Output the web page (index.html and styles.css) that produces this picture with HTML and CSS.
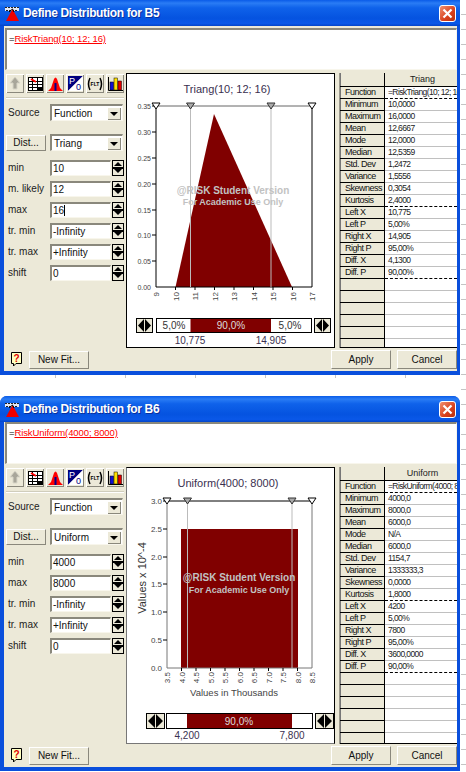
FILE: index.html
```html
<!DOCTYPE html>
<html>
    <head>
        <meta charset="utf8">
        <title>Define Distribution</title>
        <link rel="stylesheet" href="styles.css">
    </head>
    <body>
        <div class="window win_first">
            <div class="titlebar">
                <svg class="app_icon" width="16" height="15" viewBox="0 0 16 15"><rect x="0" y="1" width="14" height="4" fill="#e4e8f4"/><path d="M0 1.500 H14 M1 4.500 H13" stroke="#222" stroke-dasharray="2 1"/><path d="M1 15 L7.500 3 L14 15 Z" fill="#f00000"/><path d="M4 6 L7.500 3 L9 6" fill="none" stroke="#000"/></svg>
                <span class="title_text">Define Distribution for B5</span>
                <button class="close_btn"><svg width="11" height="11" viewBox="0 0 11 11"><path d="M1.5 1.5 L9.5 9.5 M9.5 1.5 L1.5 9.5" stroke="#fff" stroke-width="2.2"/></svg></button>
            </div>
            <div class="client">
                <div class="formula"><span class="eq">=</span><span class="ref">RiskTriang(10; 12; 16)</span></div>
                <div class="body_row">
                    <div class="left_pane">
                        <div class="toolbar">
                            <span class="tool"><svg width="14" height="15" viewBox="0 0 14 15"><path d="M7 1 L12 7 H9 V13 H5 V7 H2 Z" fill="#a8a69a" stroke="#d8d6c8"/></svg></span>
                            <span class="tool"><svg width="15" height="14" viewBox="0 0 15 14"><rect x="0.5" y="0.5" width="14" height="13" fill="#fff" stroke="#000"/><path d="M0 4.5 H15 M0 7.5 H15 M0 10.5 H15 M4.5 0 V14 M9.5 0 V14" stroke="#000"/><path d="M3 2 L8 5" stroke="#f00" stroke-width="2"/><rect x="9" y="10" width="5" height="3" fill="#000"/></svg></span>
                            <span class="tool"><svg width="15" height="14" viewBox="0 0 15 14"><path d="M0 14 L3 11 L6 2 Q7.500 -1 9 2 L12 11 L15 14 Z" fill="#f00"/><rect x="6.500" y="6" width="2" height="8" fill="#00008b"/></svg></span>
                            <span class="tool"><svg width="15" height="15" viewBox="0 0 15 15"><path d="M0 0 H15 L0 15 Z" fill="#00007f"/><path d="M15 0 V15 H0 Z" fill="#fff"/><text x="1" y="8" class="tool_letter tool_p">P</text><text x="8" y="14" class="tool_letter tool_o">0</text></svg></span>
                            <span class="tool"><svg width="16" height="14" viewBox="0 0 16 14"><path d="M3 1 Q0 7 3 13 M13 1 Q16 7 13 13" fill="none" stroke="#000" stroke-width="1.500"/><text x="8" y="9" class="tool_flt">FLT</text></svg></span>
                            <span class="tool"><svg width="15" height="14" viewBox="0 0 15 14"><path d="M0.5 0 V13.500 H15" fill="none" stroke="#000"/><rect x="2" y="5" width="3.500" height="8" fill="#1010d0" stroke="#000" stroke-width=".5"/><rect x="6" y="1" width="3.500" height="12" fill="#ffe000" stroke="#000" stroke-width=".5"/><rect x="10" y="4" width="3.500" height="9" fill="#e00000" stroke="#000" stroke-width=".5"/></svg></span>
                        </div>
                        <div class="sep"></div>
                        <div class="field source_field">
                            <span class="label">Source</span>
                            <span class="combo"><span class="combo_val">Function</span><span class="combo_btn"></span></span>
                        </div>
                        <div class="field dist_field">
                            <button class="btn dist_btn">Dist...</button>
                            <span class="combo"><span class="combo_val">Triang</span><span class="combo_btn"></span></span>
                        </div>
                        <div class="params">
                            <div class="field"><span class="label">min</span><span class="input">10</span><span class="spin"><i class="up"></i><i class="down"></i></span></div>
                            <div class="field"><span class="label">m. likely</span><span class="input">12</span><span class="spin"><i class="up"></i><i class="down"></i></span></div>
                            <div class="field"><span class="label">max</span><span class="input caret">16</span><span class="spin"><i class="up"></i><i class="down"></i></span></div>
                            <div class="field"><span class="label">tr. min</span><span class="input">-Infinity</span><span class="spin"><i class="up"></i><i class="down"></i></span></div>
                            <div class="field"><span class="label">tr. max</span><span class="input">+Infinity</span><span class="spin"><i class="up"></i><i class="down"></i></span></div>
                            <div class="field"><span class="label">shift</span><span class="input">0</span><span class="spin"><i class="up"></i><i class="down"></i></span></div>
                        </div>
                    </div>
                    <div class="chart_panel">
                        <svg class="chart" width="209" height="275" viewBox="126 73 209 275">
                            <text x="227" y="93" class="c_title">Triang(10; 12; 16)</text>
                            <path d="M175.500 287 L214 114 L292 287 Z" fill="#800000"/>
                            <path d="M156 106 H312" stroke="#666"/>
                            <path d="M156 106 V287 H312 V106" fill="none" stroke="#000"/>
                            <path d="M190.500 106 V287 M271 106 V287" stroke="#bbb"/>
                            <path d="M152 106 H156 M152 132 H156 M152 158 H156 M152 184 H156 M152 210 H156 M152 235 H156 M152 261 H156 M175.500 287 V290 M195 287 V290 M214.500 287 V290 M234 287 V290 M253.500 287 V290 M273 287 V290 M292.500 287 V290" stroke="#000"/>
                            <text x="151" y="109" class="c_tick">0.35</text>
                            <text x="151" y="135" class="c_tick">0.30</text>
                            <text x="151" y="161" class="c_tick">0.25</text>
                            <text x="151" y="187" class="c_tick">0.20</text>
                            <text x="151" y="213" class="c_tick">0.15</text>
                            <text x="151" y="238" class="c_tick">0.10</text>
                            <text x="151" y="264" class="c_tick">0.05</text>
                            <text x="151" y="290" class="c_tick">0.00</text>
                            <text transform="translate(159 292) rotate(-90)" class="c_xtick">9</text>
                            <text transform="translate(178.500 292) rotate(-90)" class="c_xtick">10</text>
                            <text transform="translate(198 292) rotate(-90)" class="c_xtick">11</text>
                            <text transform="translate(217.500 292) rotate(-90)" class="c_xtick">12</text>
                            <text transform="translate(237 292) rotate(-90)" class="c_xtick">13</text>
                            <text transform="translate(256.500 292) rotate(-90)" class="c_xtick">14</text>
                            <text transform="translate(276 292) rotate(-90)" class="c_xtick">15</text>
                            <text transform="translate(295.500 292) rotate(-90)" class="c_xtick">16</text>
                            <text transform="translate(315 292) rotate(-90)" class="c_xtick">17</text>
                            <path d="M152 103 H160 L156 109 Z" fill="#fff" stroke="#000"/>
                            <path d="M186.500 103 H194.500 L190.500 109 Z" fill="#aaa" stroke="#333"/>
                            <path d="M267 103 H275 L271 109 Z" fill="#aaa" stroke="#333"/>
                            <path d="M308 103 H316 L312 109 Z" fill="#fff" stroke="#000"/>
                            <text x="233" y="194" class="c_mark">@RISK Student Version</text>
                            <text x="233" y="205" class="c_mark2">For Academic Use Only</text>
                            <rect x="136.500" y="318.500" width="16" height="14" fill="#ece9d8" stroke="#000"/>
                            <path d="M144 319 V332 L138 325.500 Z M145 319 V332 L151 325.500 Z" fill="#000"/>
                            <rect x="156.500" y="318.500" width="155" height="14" fill="#fff" stroke="#000"/>
                            <rect x="190.500" y="319" width="80.500" height="13" fill="#800000"/>
                            <text x="174" y="329" class="c_pct">5,0%</text>
                            <text x="231" y="329" class="c_pct c_pct_mid">90,0%</text>
                            <text x="290" y="329" class="c_pct">5,0%</text>
                            <rect x="314.500" y="318.500" width="16" height="14" fill="#ece9d8" stroke="#000"/>
                            <path d="M322 319 V332 L316 325.500 Z M323 319 V332 L329 325.500 Z" fill="#000"/>
                            <text x="190" y="344" class="c_val">10,775</text>
                            <text x="271" y="344" class="c_val">14,905</text>
                        </svg>
                    </div>
                    <div class="split"></div>
                    <div class="table_pane">
                        <table class="stats">
                            <tr class="head"><th></th><td>Triang</td></tr>
                            <tr class="dash"><th>Function</th><td>=RiskTriang(10; 12; 16)</td></tr>
                            <tr><th>Minimum</th><td>10,0000</td></tr>
                            <tr><th>Maximum</th><td>16,0000</td></tr>
                            <tr><th>Mean</th><td>12,6667</td></tr>
                            <tr><th>Mode</th><td>12,0000</td></tr>
                            <tr><th>Median</th><td>12,5359</td></tr>
                            <tr><th>Std. Dev</th><td>1,2472</td></tr>
                            <tr><th>Variance</th><td>1,5556</td></tr>
                            <tr><th>Skewness</th><td>0,3054</td></tr>
                            <tr class="dash"><th>Kurtosis</th><td>2,4000</td></tr>
                            <tr><th>Left X</th><td>10,775</td></tr>
                            <tr><th>Left P</th><td>5,00%</td></tr>
                            <tr><th>Right X</th><td>14,905</td></tr>
                            <tr><th>Right P</th><td>95,00%</td></tr>
                            <tr><th>Diff. X</th><td>4,1300</td></tr>
                            <tr class="dash"><th>Diff. P</th><td>90,00%</td></tr>
                            <tr><th></th><td></td></tr>
                            <tr><th></th><td></td></tr>
                            <tr><th></th><td></td></tr>
                            <tr><th></th><td></td></tr>
                            <tr><th></th><td></td></tr>
                            <tr><th></th><td></td></tr>
                        </table>
                    </div>
                </div>
                <div class="footer">
                    <svg class="help" width="13" height="15" viewBox="0 0 13 15"><path d="M1.500 0.500 H11.500 V11.500 H6 L3.500 14 V11.500 H1.500 Z" fill="#ffffc0" stroke="#000"/><text x="6.500" y="10" class="help_q">?</text></svg>
                    <button class="btn newfit_btn">New Fit...</button>
                    <span class="spacer"></span>
                    <button class="btn action_btn">Apply</button>
                    <button class="btn action_btn">Cancel</button>
                </div>
            </div>
        </div>

        <div class="grid_ticks"></div>

        <div class="window win_second">
            <div class="titlebar">
                <svg class="app_icon" width="16" height="15" viewBox="0 0 16 15"><rect x="0" y="1" width="14" height="4" fill="#e4e8f4"/><path d="M0 1.500 H14 M1 4.500 H13" stroke="#222" stroke-dasharray="2 1"/><path d="M1 15 L7.500 3 L14 15 Z" fill="#f00000"/><path d="M4 6 L7.500 3 L9 6" fill="none" stroke="#000"/></svg>
                <span class="title_text">Define Distribution for B6</span>
                <button class="close_btn"><svg width="11" height="11" viewBox="0 0 11 11"><path d="M1.5 1.5 L9.5 9.5 M9.5 1.5 L1.5 9.5" stroke="#fff" stroke-width="2.2"/></svg></button>
            </div>
            <div class="client">
                <div class="formula"><span class="eq">=</span><span class="ref">RiskUniform(4000; 8000)</span></div>
                <div class="body_row">
                    <div class="left_pane">
                        <div class="toolbar">
                            <span class="tool"><svg width="14" height="15" viewBox="0 0 14 15"><path d="M7 1 L12 7 H9 V13 H5 V7 H2 Z" fill="#a8a69a" stroke="#d8d6c8"/></svg></span>
                            <span class="tool"><svg width="15" height="14" viewBox="0 0 15 14"><rect x="0.5" y="0.5" width="14" height="13" fill="#fff" stroke="#000"/><path d="M0 4.5 H15 M0 7.5 H15 M0 10.5 H15 M4.5 0 V14 M9.5 0 V14" stroke="#000"/><path d="M3 2 L8 5" stroke="#f00" stroke-width="2"/><rect x="9" y="10" width="5" height="3" fill="#000"/></svg></span>
                            <span class="tool"><svg width="15" height="14" viewBox="0 0 15 14"><path d="M0 14 L3 11 L6 2 Q7.500 -1 9 2 L12 11 L15 14 Z" fill="#f00"/><rect x="6.500" y="6" width="2" height="8" fill="#00008b"/></svg></span>
                            <span class="tool"><svg width="15" height="15" viewBox="0 0 15 15"><path d="M0 0 H15 L0 15 Z" fill="#00007f"/><path d="M15 0 V15 H0 Z" fill="#fff"/><text x="1" y="8" class="tool_letter tool_p">P</text><text x="8" y="14" class="tool_letter tool_o">0</text></svg></span>
                            <span class="tool"><svg width="16" height="14" viewBox="0 0 16 14"><path d="M3 1 Q0 7 3 13 M13 1 Q16 7 13 13" fill="none" stroke="#000" stroke-width="1.500"/><text x="8" y="9" class="tool_flt">FLT</text></svg></span>
                            <span class="tool"><svg width="15" height="14" viewBox="0 0 15 14"><path d="M0.5 0 V13.500 H15" fill="none" stroke="#000"/><rect x="2" y="5" width="3.500" height="8" fill="#1010d0" stroke="#000" stroke-width=".5"/><rect x="6" y="1" width="3.500" height="12" fill="#ffe000" stroke="#000" stroke-width=".5"/><rect x="10" y="4" width="3.500" height="9" fill="#e00000" stroke="#000" stroke-width=".5"/></svg></span>
                        </div>
                        <div class="sep"></div>
                        <div class="field source_field">
                            <span class="label">Source</span>
                            <span class="combo"><span class="combo_val">Function</span><span class="combo_btn"></span></span>
                        </div>
                        <div class="field dist_field">
                            <button class="btn dist_btn">Dist...</button>
                            <span class="combo"><span class="combo_val">Uniform</span><span class="combo_btn"></span></span>
                        </div>
                        <div class="params">
                            <div class="field"><span class="label">min</span><span class="input">4000</span><span class="spin"><i class="up"></i><i class="down"></i></span></div>
                            <div class="field"><span class="label">max</span><span class="input">8000</span><span class="spin"><i class="up"></i><i class="down"></i></span></div>
                            <div class="field"><span class="label">tr. min</span><span class="input">-Infinity</span><span class="spin"><i class="up"></i><i class="down"></i></span></div>
                            <div class="field"><span class="label">tr. max</span><span class="input">+Infinity</span><span class="spin"><i class="up"></i><i class="down"></i></span></div>
                            <div class="field"><span class="label">shift</span><span class="input">0</span><span class="spin"><i class="up"></i><i class="down"></i></span></div>
                        </div>
                    </div>
                    <div class="chart_panel panel_gray">
                        <svg class="chart" width="209" height="277" viewBox="126 467 209 277">
                            <text x="228" y="487" class="c_title">Uniform(4000; 8000)</text>
                            <rect x="181" y="529" width="117" height="139" fill="#800000"/>
                            <path d="M167 668 V501 M312 501 V668 H167" fill="none" stroke="#777"/>
                            <path d="M167 501 H312" stroke="#000"/>
                            <path d="M187.500 501 V668 M292 501 V668" stroke="#bbb"/>
                            <path d="M163 501 H167 M163 529 H167 M163 557 H167 M163 584 H167 M163 612 H167 M163 640 H167 M181.500 668 V671 M196 668 V671 M210.500 668 V671 M225 668 V671 M239.500 668 V671 M254 668 V671 M268.500 668 V671 M283 668 V671 M297.500 668 V671" stroke="#000"/>
                            <text x="162" y="504" class="c_tick c_tick_big">3.0</text>
                            <text x="162" y="532" class="c_tick c_tick_big">2.5</text>
                            <text x="162" y="560" class="c_tick c_tick_big">2.0</text>
                            <text x="162" y="587" class="c_tick c_tick_big">1.5</text>
                            <text x="162" y="615" class="c_tick c_tick_big">1.0</text>
                            <text x="162" y="643" class="c_tick c_tick_big">0.5</text>
                            <text x="162" y="671" class="c_tick c_tick_big">0.0</text>
                            <text transform="translate(170 672) rotate(-90)" class="c_xtick">3.5</text>
                            <text transform="translate(184.500 672) rotate(-90)" class="c_xtick">4.0</text>
                            <text transform="translate(199 672) rotate(-90)" class="c_xtick">4.5</text>
                            <text transform="translate(213.500 672) rotate(-90)" class="c_xtick">5.0</text>
                            <text transform="translate(228 672) rotate(-90)" class="c_xtick">5.5</text>
                            <text transform="translate(242.500 672) rotate(-90)" class="c_xtick">6.0</text>
                            <text transform="translate(257 672) rotate(-90)" class="c_xtick">6.5</text>
                            <text transform="translate(271.500 672) rotate(-90)" class="c_xtick">7.0</text>
                            <text transform="translate(286 672) rotate(-90)" class="c_xtick">7.5</text>
                            <text transform="translate(300.500 672) rotate(-90)" class="c_xtick">8.0</text>
                            <text transform="translate(315 672) rotate(-90)" class="c_xtick">8.5</text>
                            <text transform="translate(146 578) rotate(-90)" class="c_ylabel">Values x 10^-4</text>
                            <text x="234" y="696" class="c_xlabel">Values in Thousands</text>
                            <path d="M163 498 H171 L167 504 Z" fill="#fff" stroke="#000"/>
                            <path d="M183.500 498 H191.500 L187.500 504 Z" fill="#aaa" stroke="#333"/>
                            <path d="M288 498 H296 L292 504 Z" fill="#aaa" stroke="#333"/>
                            <path d="M308 498 H316 L312 504 Z" fill="#fff" stroke="#000"/>
                            <text x="239" y="581" class="c_mark">@RISK Student Version</text>
                            <text x="239" y="593" class="c_mark2">For Academic Use Only</text>
                            <rect x="146.500" y="713.500" width="18" height="15" fill="#ece9d8" stroke="#000"/>
                            <path d="M155 714 V728 L148 721 Z M156 714 V728 L163 721 Z" fill="#000"/>
                            <rect x="166.500" y="713.500" width="146" height="15" fill="#fff" stroke="#000"/>
                            <rect x="187" y="714" width="105" height="14" fill="#800000"/>
                            <text x="239" y="725" class="c_pct c_pct_mid">90,0%</text>
                            <rect x="315.500" y="713.500" width="18" height="15" fill="#ece9d8" stroke="#000"/>
                            <path d="M324 714 V728 L317 721 Z M325 714 V728 L332 721 Z" fill="#000"/>
                            <text x="187" y="739" class="c_val">4,200</text>
                            <text x="292" y="739" class="c_val">7,800</text>
                        </svg>
                    </div>
                    <div class="split"></div>
                    <div class="table_pane">
                        <table class="stats">
                            <tr class="head"><th></th><td>Uniform</td></tr>
                            <tr class="dash"><th>Function</th><td>=RiskUniform(4000; 8000)</td></tr>
                            <tr><th>Minimum</th><td>4000,0</td></tr>
                            <tr><th>Maximum</th><td>8000,0</td></tr>
                            <tr><th>Mean</th><td>6000,0</td></tr>
                            <tr><th>Mode</th><td>N/A</td></tr>
                            <tr><th>Median</th><td>6000,0</td></tr>
                            <tr><th>Std. Dev</th><td>1154,7</td></tr>
                            <tr><th>Variance</th><td>1333333,3</td></tr>
                            <tr><th>Skewness</th><td>0,0000</td></tr>
                            <tr class="dash"><th>Kurtosis</th><td>1,8000</td></tr>
                            <tr><th>Left X</th><td>4200</td></tr>
                            <tr><th>Left P</th><td>5,00%</td></tr>
                            <tr><th>Right X</th><td>7800</td></tr>
                            <tr><th>Right P</th><td>95,00%</td></tr>
                            <tr><th>Diff. X</th><td>3600,0000</td></tr>
                            <tr class="dash"><th>Diff. P</th><td>90,00%</td></tr>
                            <tr><th></th><td></td></tr>
                            <tr><th></th><td></td></tr>
                            <tr><th></th><td></td></tr>
                            <tr><th></th><td></td></tr>
                            <tr><th></th><td></td></tr>
                            <tr><th></th><td></td></tr>
                        </table>
                    </div>
                </div>
                <div class="footer">
                    <svg class="help" width="13" height="15" viewBox="0 0 13 15"><path d="M1.500 0.500 H11.500 V11.500 H6 L3.500 14 V11.500 H1.500 Z" fill="#ffffc0" stroke="#000"/><text x="6.500" y="10" class="help_q">?</text></svg>
                    <button class="btn newfit_btn">New Fit...</button>
                    <span class="spacer"></span>
                    <button class="btn action_btn">Apply</button>
                    <button class="btn action_btn">Cancel</button>
                </div>
            </div>
        </div>
    </body>
</html>
```

FILE: styles.css
```css
html,body{
    margin:0;
    padding:0;
}
html{
    background:#fff;
}
body{
    width:466px;
    height:772px;
    overflow:hidden;
    font-family:"Liberation Sans",Arial,sans-serif;
    font-size:10px;
    color:#111;
    background:repeating-linear-gradient(#fff 0,#fff 14px,#c4c4c4 14px,#c4c4c4 15px) right top / 5px 100% no-repeat;
}
.window{
    width:460px;
    height:375px;
    background:#0a4fdc;
    padding:0 3px 4px 4px;
    box-sizing:border-box;
    display:flex;
    flex-direction:column;
}
.win_second{
    border-radius:7px 7px 0 0;
}
.grid_ticks{
    width:460px;
    height:3px;
    margin-bottom:18px;
    background:repeating-linear-gradient(90deg,#fff 0,#fff 69px,#c4c4c4 69px,#c4c4c4 70px) -14px 0;
}
.titlebar{
    height:26px;
    flex:none;
    margin:0 -3px 0 -4px;
    padding:0 4px 0 5px;
    display:flex;
    align-items:center;
    gap:2px;
    color:#fff;
    background:linear-gradient(#0a5be8 0,#2a7cf5 12%,#0f62ea 30%,#0553e0 70%,#0a58e8 90%,#0444c8 100%);
    border-radius:inherit;
}
.title_text{
    flex:1;
    font-size:12px;
    font-weight:bold;
    letter-spacing:-0.35px;
    text-shadow:1px 1px 0 #0a2f9c;
}
.close_btn{
    width:17px;
    height:17px;
    padding:0;
    border:1px solid #fff;
    border-radius:3px;
    background:linear-gradient(135deg,#f09070,#d8401c 60%,#b8300c);
    display:flex;
    align-items:center;
    justify-content:center;
}
.client{
    flex:1;
    min-height:0;
    background:#ece9d8;
    display:flex;
    flex-direction:column;
}
.formula{
    height:42px;
    flex:none;
    margin:2px 0 3px 1px;
    padding:3px 2px;
    box-sizing:border-box;
    background:#fff;
    border:1px solid;
    border-width:2px 1px 1px 2px;
    border-color:#8a887c #f8f6ec #f8f6ec #8a887c;
    font-size:9.5px;
    letter-spacing:-0.1px;
}
.win_second .formula{
    margin-top:0;
}
.eq{
    color:#000;
}
.ref{
    color:#f00;
    text-decoration:underline;
}
.body_row{
    flex:1;
    min-height:0;
    display:flex;
}
.left_pane{
    width:122px;
    flex:none;
    padding:1px 0 0 2px;
    box-sizing:border-box;
}
.toolbar{
    display:flex;
    gap:2px;
}
.tool{
    width:18px;
    height:19px;
    background:#ece9d8;
    box-shadow:inset 1px 1px 0 #fff,inset -1px -1px 0 #8a887c;
    display:flex;
    align-items:center;
    justify-content:center;
}
.tool_letter{
    font-size:9px;
}
.tool_p{
    fill:#fff;
}
.tool_o{
    fill:#00007f;
}
.tool_flt{
    font-size:5px;
    font-weight:bold;
    text-anchor:middle;
}
.sep{
    height:1px;
    margin:4px 2px 0 0;
    background:#fff;
    border-top:1px solid #d0cdbc;
}
.field{
    display:flex;
    align-items:center;
    height:17px;
    margin-bottom:4px;
}
.source_field{
    margin-top:5px;
    margin-bottom:13px;
}
.dist_field{
    margin-bottom:8px;
}
.label{
    width:44px;
    flex:none;
    padding-left:2px;
    box-sizing:border-box;
    color:#222;
    white-space:nowrap;
}
.combo{
    width:73px;
    height:17px;
    box-sizing:border-box;
    background:#fff;
    border:1px solid;
    border-width:2px 1px 1px 2px;
    border-color:#8a887c #f8f6ec #f8f6ec #8a887c;
    display:flex;
    align-items:center;
}
.combo_val{
    flex:1;
    padding-left:2px;
}
.combo_btn{
    width:14px;
    height:13px;
    margin-right:1px;
    background:#ece9d8;
    box-shadow:inset 1px 1px 0 #fff,inset -1px -1px 0 #8a887c;
    position:relative;
}
.combo_btn::after{
    content:"";
    position:absolute;
    left:3px;
    top:5px;
    border:4px solid transparent;
    border-top:4px solid #000;
    border-bottom:0;
}
.btn{
    font-family:"Liberation Sans",Arial,sans-serif;
    font-size:10px;
    color:#111;
    padding:0;
    background:#ece9d8;
    border:1px solid;
    border-color:#fff #8a887c #8a887c #fff;
}
.dist_btn{
    width:40px;
    height:16px;
    margin-right:4px;
    flex:none;
}
.input{
    width:61px;
    height:16px;
    flex:none;
    box-sizing:border-box;
    padding-left:1px;
    line-height:13px;
    background:#fff;
    border:1px solid;
    border-width:2px 1px 1px 2px;
    border-color:#8a887c #f8f6ec #f8f6ec #8a887c;
    white-space:nowrap;
    overflow:hidden;
}
.caret::after{
    content:"";
    display:inline-block;
    width:1px;
    height:11px;
    background:#000;
    vertical-align:-2px;
}
.spin{
    width:10px;
    height:14px;
    margin-left:1px;
    flex:none;
    border:1px solid #000;
    background:linear-gradient(#ece9d8 46%,#000 46%,#000 54%,#ece9d8 54%);
    display:flex;
    flex-direction:column;
    justify-content:space-around;
    align-items:center;
}
.spin i{
    width:0;
    height:0;
    border-left:4px solid transparent;
    border-right:4px solid transparent;
}
.spin .up{
    border-bottom:4px solid #000;
}
.spin .down{
    border-top:4px solid #000;
}
.chart_panel{
    width:209px;
    flex:none;
    background:#fff;
    border:1px solid #000;
    box-sizing:border-box;
    overflow:hidden;
}
.panel_gray{
    border-color:#000 #000 #777 #777;
}
.chart{
    display:block;
    margin:-1px;
}
.chart text{
    font-family:"Liberation Sans",Arial,sans-serif;
}
.c_title{
    font-size:11px;
    text-anchor:middle;
    fill:#3a3050;
}
.c_tick{
    font-size:7px;
    text-anchor:end;
    fill:#444;
}
.c_tick_big{
    font-size:8px;
}
.c_xtick{
    font-size:8px;
    text-anchor:end;
    fill:#444;
}
.c_ylabel{
    font-size:11px;
    text-anchor:middle;
    fill:#333;
}
.c_xlabel{
    font-size:9.5px;
    text-anchor:middle;
    fill:#444;
}
.c_mark{
    font-size:10px;
    font-weight:bold;
    text-anchor:middle;
    fill:#c2c2c2;
}
.c_mark2{
    font-size:9px;
    font-weight:bold;
    text-anchor:middle;
    fill:#c2c2c2;
}
.c_pct{
    font-size:10px;
    text-anchor:middle;
    fill:#333;
}
.c_pct_mid{
    fill:#ddd;
}
.c_val{
    font-size:10px;
    text-anchor:middle;
    fill:#3a3050;
}
.split{
    width:4px;
    flex:none;
    background:#ece9d8;
    border-right:1px solid #9a988c;
}
.table_pane{
    flex:1;
    min-width:0;
    overflow:hidden;
    border-bottom:1px solid #000;
    box-sizing:border-box;
    background:#fff;
}
.stats{
    width:100%;
    table-layout:fixed;
    border-collapse:collapse;
    font-size:9px;
}
.stats tr{
    height:12px;
}
.stats th{
    width:44px;
    padding:0 0 0 4px;
    height:12px;
    box-sizing:border-box;
    text-align:left;
    font-weight:normal;
    letter-spacing:-0.5px;
    background:#ece9d8;
    white-space:nowrap;
    overflow:hidden;
    border-right:1px solid #000;
    border-bottom:1px solid #000;
    border-left:1px solid #777;
    line-height:11px;
}
.stats td{
    padding:0 0 0 3px;
    height:12px;
    box-sizing:border-box;
    font-size:8.5px;
    letter-spacing:-0.6px;
    white-space:nowrap;
    overflow:hidden;
    border-bottom:1px solid #c0c0c0;
    line-height:11px;
    color:#222;
}
.stats .head{
    height:13px;
}
.stats .head td{
    background:#ece9d8;
    text-align:center;
    font-size:9px;
    letter-spacing:0;
    border-bottom:1px solid #000;
}
.stats .dash td{
    border-bottom:1px dashed #000;
}
.footer{
    height:23px;
    flex:none;
    display:flex;
    align-items:center;
    padding:0 0 0 6px;
}
.help{
    flex:none;
}
.newfit_btn{
    width:60px;
    height:18px;
    margin-left:6px;
}
.spacer{
    flex:1;
}
.action_btn{
    width:60px;
    height:19px;
    margin-left:6px;
}
.help_q{
    font-size:10px;
    font-weight:bold;
    text-anchor:middle;
    fill:#e00000;
}
```
